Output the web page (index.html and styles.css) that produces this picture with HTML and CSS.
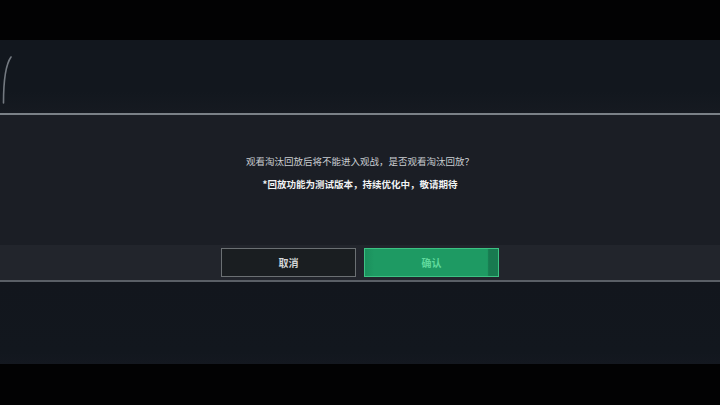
FILE: index.html
```html
<!DOCTYPE html>
<html lang="zh-CN">
<head>
<meta charset="utf-8">
<link rel="stylesheet" href="styles.css">
</head>
<body>
<div class="screen">
  <div class="band"></div>
  <div class="stage">
    <div class="upper">
      <svg class="arc" width="12" height="50" viewBox="0 0 12 50"><path d="M10 1 C 5 8, 2.5 20, 2.5 47" fill="none" stroke="#737980" stroke-width="1.6" stroke-linecap="round"/></svg>
    </div>
    <div class="rule rule-top"></div>
    <div class="dialog">
      <p class="msg">观看淘汰回放后将不能进入观战，是否观看淘汰回放？</p>
      <p class="note">*回放功能为测试版本，持续优化中，敬请期待</p>
    </div>
    <div class="actions">
      <button class="btn btn-cancel">取消</button>
      <button class="btn btn-ok">确认</button>
    </div>
    <div class="rule rule-bottom"></div>
    <div class="lower"></div>
  </div>
  <div class="band band-bottom"></div>
</div>
</body>
</html>
```
FILE: styles.css
```css
html, body {
  margin: 0;
  padding: 0;
  background: #000;
}
body {
  width: 720px;
  height: 405px;
  overflow: hidden;
  font-family: "Noto Sans CJK SC", "Noto Sans", sans-serif;
}
.screen {
  display: flex;
  flex-direction: column;
  width: 720px;
  height: 405px;
}
.band {
  height: 40px;
  background: #020203;
}
.band-bottom {
  height: 41px;
}
.stage {
  height: 324px;
  display: flex;
  flex-direction: column;
  background: #12171e;
}
.upper {
  height: 73px;
  padding: 16px 0 0 1px;
  box-sizing: border-box;
  background: linear-gradient(#12171e 70%, #161a21);
}
.arc {
  display: block;
}
.rule {
  height: 2px;
}
.rule-top {
  background: #7b8187;
}
.rule-bottom {
  background: #5a5f66;
}
.dialog {
  height: 130px;
  box-sizing: border-box;
  padding-top: 40px;
  background: #1b1e25;
  display: flex;
  flex-direction: column;
  align-items: center;
  gap: 11px;
}
.msg, .note {
  margin: 0;
  font-size: 9.5px;
  line-height: 12px;
  text-align: center;
}
.msg {
  color: #c9cdd1;
}
.note {
  color: #f2f3f4;
  font-weight: 700;
}
.actions {
  height: 35px;
  box-sizing: border-box;
  padding-top: 3px;
  background: #22252c;
  display: flex;
  justify-content: center;
  align-items: flex-start;
  gap: 8px;
}
.btn {
  width: 135px;
  height: 29px;
  margin: 0;
  padding: 0;
  font-family: "Noto Sans CJK SC", "Noto Sans", sans-serif;
  font-size: 10px;
  font-weight: 700;
  line-height: 27px;
  box-sizing: border-box;
}
.btn-cancel {
  background: #1a1e21;
  border: 1px solid #6b7073;
  color: #d3d5d7;
}
.btn-ok {
  background: linear-gradient(90deg, #1b8f5c 0, #1e9a63 7%, #1e9a63 92%, #187a50 93%, #187a50 100%);
  border: 1px solid #3cc283;
  color: #5fd99c;
}
.lower {
  flex: 1;
  background: linear-gradient(#12161d, #12171e 85%, #141820);
}
```
